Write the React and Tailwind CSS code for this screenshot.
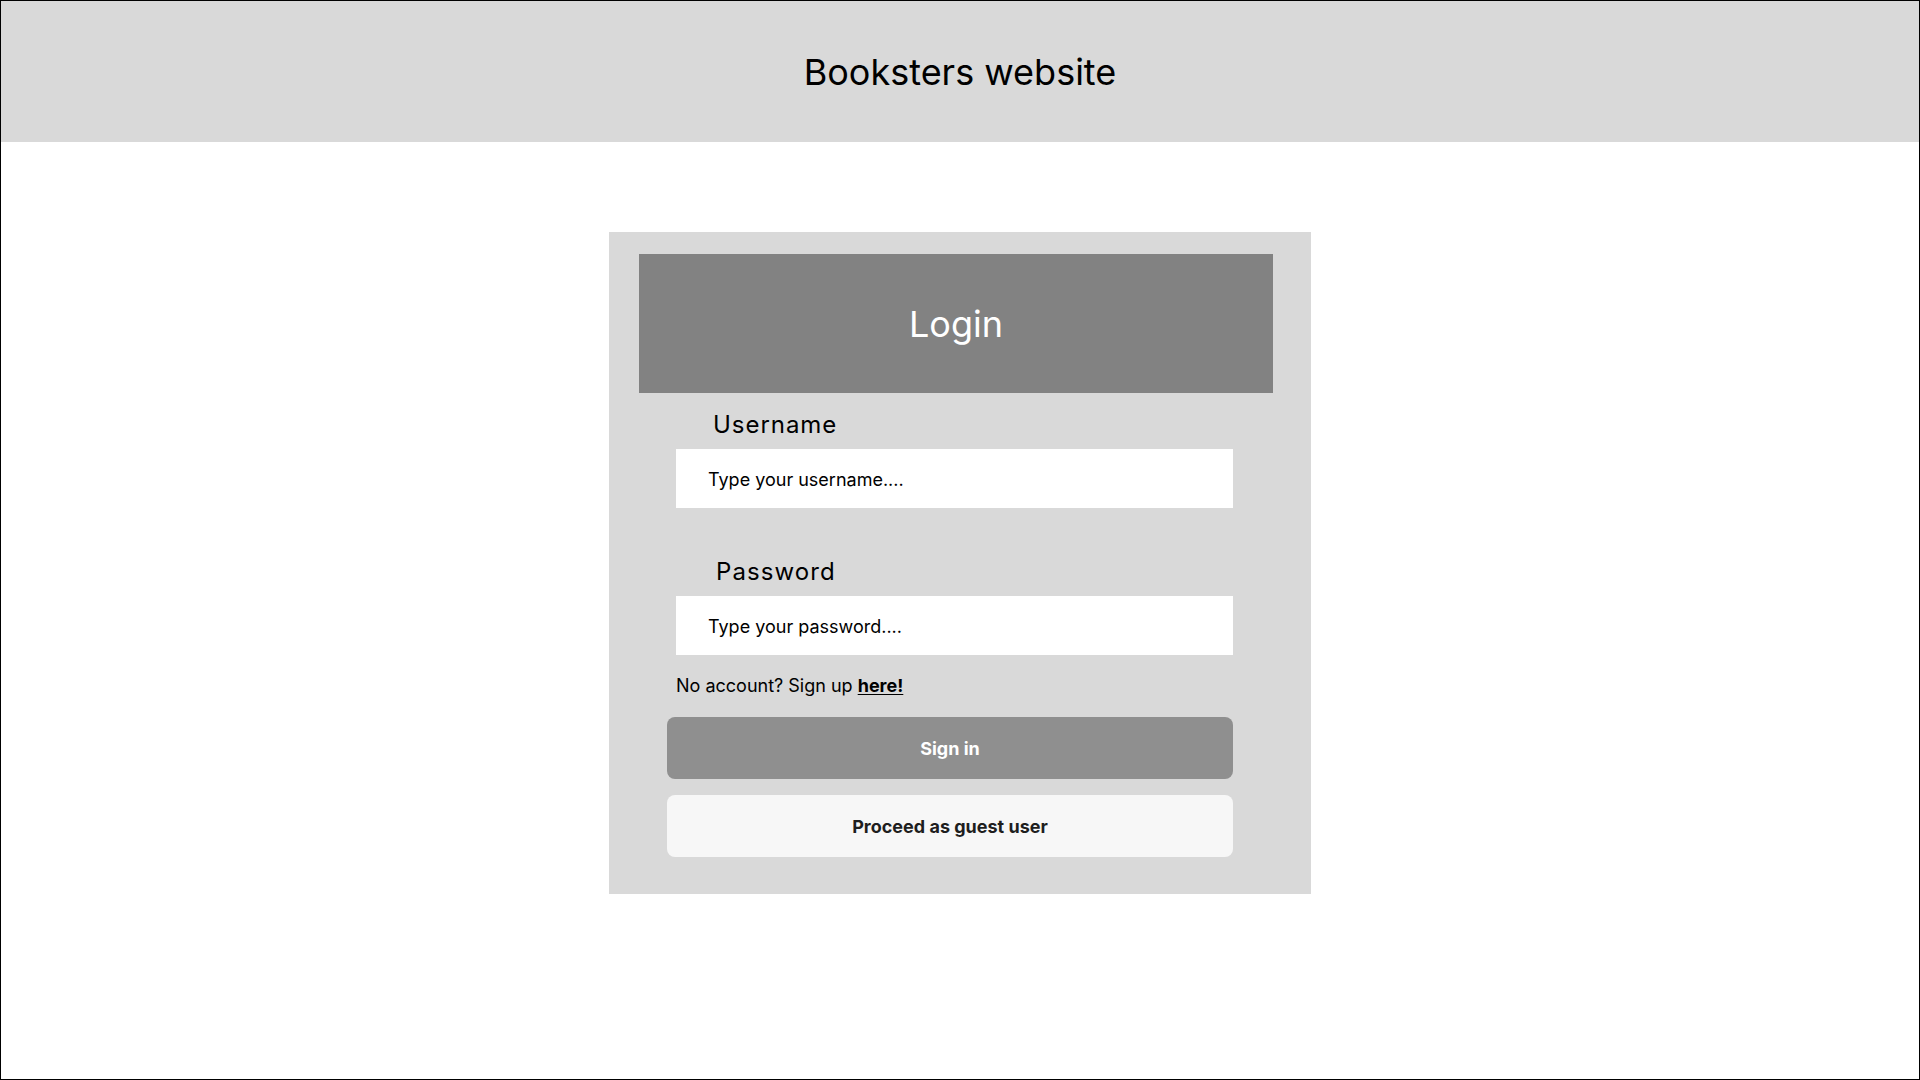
// Booksters login page
import { useState } from "react"

export default function App() {
  const [username, setUsername] = useState("")
  const [password, setPassword] = useState("")

  return (
    <div className="h-[1080px] w-[1920px] border border-black bg-white font-['Inter','Liberation_Sans',sans-serif] text-[#1e1e1e] flex flex-col">
      {/* top bar */}
      <header className="h-[141px] bg-[#d9d9d9] flex items-center justify-center shrink-0">
        <h1 className="text-[36px] leading-none font-normal text-black mt-[1px]">Booksters website</h1>
      </header>

      {/* login card */}
      <main className="flex justify-center pt-[90px]">
        <div className="w-[702px] bg-[#d9d9d9] pl-[30px] pt-[22px] pb-[37px] flex flex-col">
          <div className="w-[634px] h-[139px] bg-[#828282] flex items-center justify-center">
            <h2 className="text-[36px] leading-none font-normal text-white">Login</h2>
          </div>

          <label className="ml-[74px] mt-[20px] text-[24px] leading-none tracking-[0.04em] text-black">Username</label>
          <input
            value={username}
            onChange={(e) => setUsername(e.target.value)}
            placeholder="Type your username...."
            className="ml-[37px] mt-[12px] w-[557px] h-[59px] bg-white pl-[32px] pt-[2px] text-[18px] text-black placeholder:text-black outline-none"
          />

          <label className="ml-[77px] mt-[52px] text-[24px] leading-none tracking-[0.045em] text-black">Password</label>
          <input
            type="password"
            value={password}
            onChange={(e) => setPassword(e.target.value)}
            placeholder="Type your password...."
            className="ml-[37px] mt-[12px] w-[557px] h-[59px] bg-white pl-[32px] pt-[2px] text-[18px] text-black placeholder:text-black outline-none"
          />

          <p className="ml-[37px] mt-[22px] text-[18px] leading-none text-black">
            No account? Sign up{" "}
            <a href="#" className="font-bold underline underline-offset-2">here!</a>
          </p>

          <button className="ml-[28px] mt-[22px] w-[566px] h-[62px] rounded-[8px] bg-[#8f8f8f] text-white text-[18px] font-bold">
            Sign in
          </button>
          <button className="ml-[28px] mt-[16px] w-[566px] h-[62px] rounded-[8px] bg-[#f7f7f7] text-[#1e1e1e] text-[18px] font-bold">
            Proceed as guest user
          </button>
        </div>
      </main>
    </div>
  )
}
